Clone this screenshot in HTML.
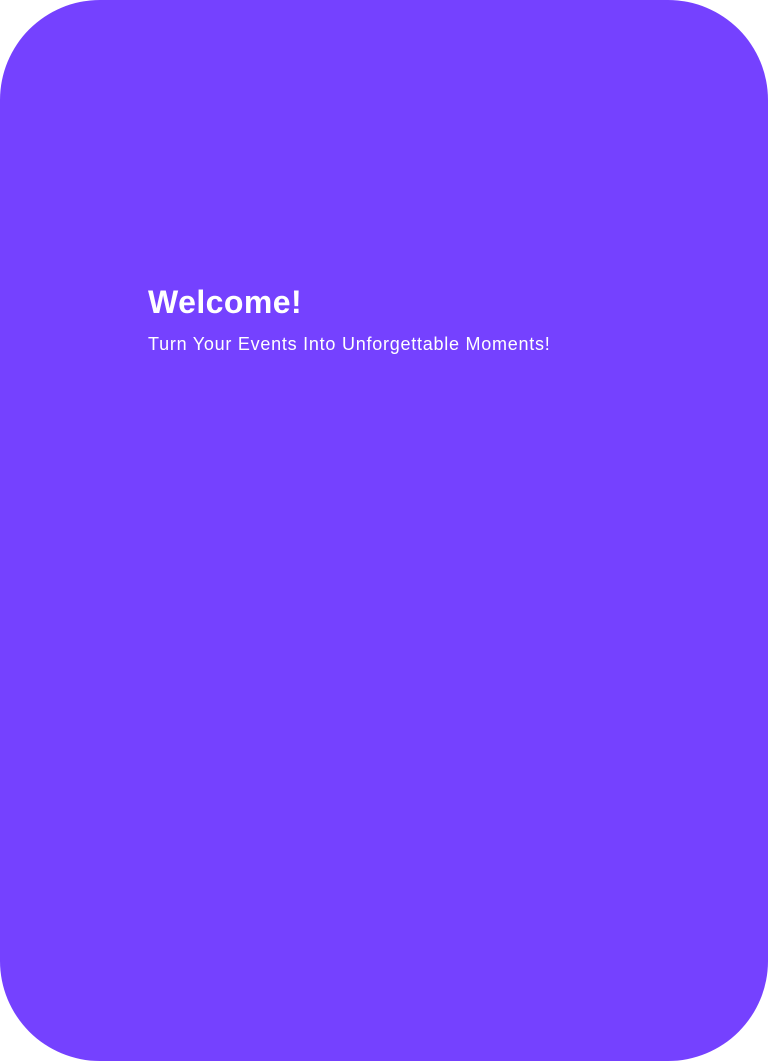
<!DOCTYPE html>
<html><head><style>
html,body{margin:0;padding:0;background:#fff;}
.card{position:absolute;left:0;top:0;width:768px;height:1061px;background:#7541ff;border-radius:100px;}
h1{position:absolute;left:148px;top:280px;margin:0;font:bold 32px/44px "Liberation Sans",sans-serif;color:#fff;letter-spacing:0.45px;}
p{position:absolute;left:148px;top:332px;margin:0;font:18px/24px "Liberation Sans",sans-serif;color:#fff;white-space:nowrap;letter-spacing:0.75px;}
</style></head><body>
<div class="card">
<h1>Welcome!</h1>
<p>Turn Your Events Into Unforgettable Moments!</p>
</div>
</body></html>
